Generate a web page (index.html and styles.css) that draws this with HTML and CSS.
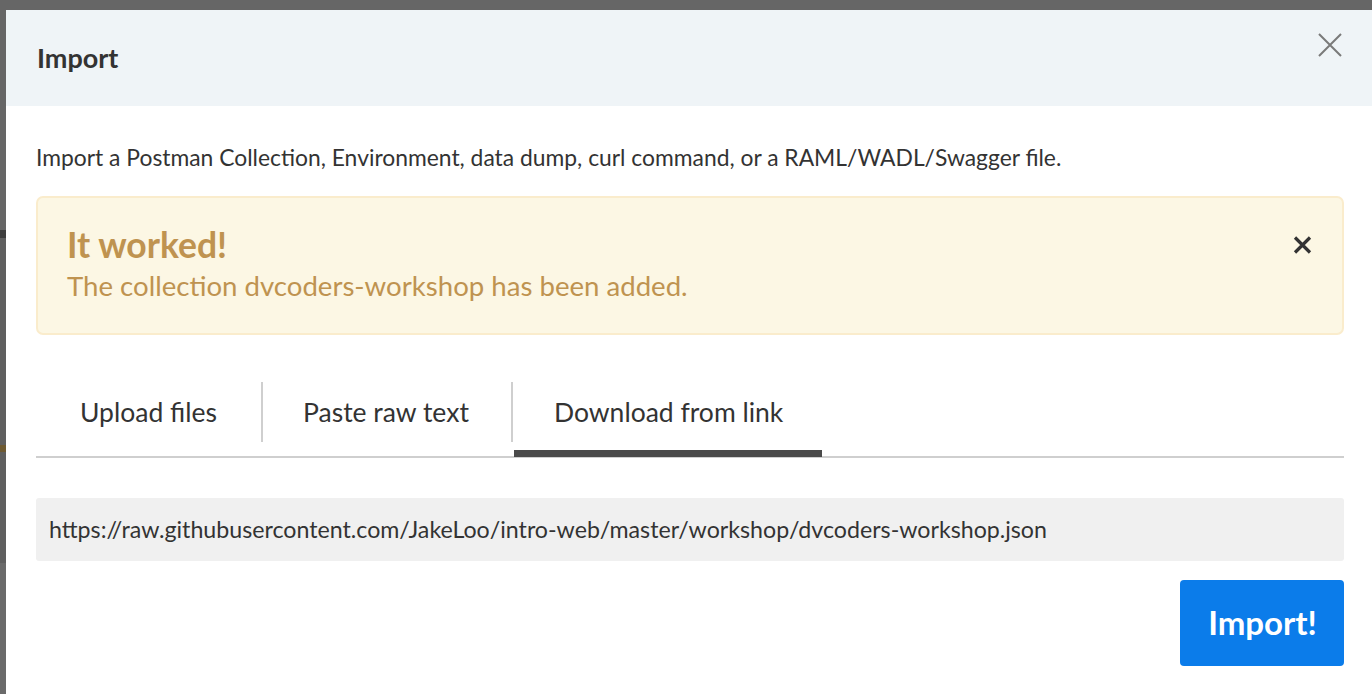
FILE: index.html
```html
<!DOCTYPE html>
<html>
<head>
<meta charset="utf-8">
<link rel="stylesheet" href="styles.css">
</head>
<body>
<div class="backdrop">
  <div class="modal">
    <div class="modal-header">
      <h1 class="modal-title">Import</h1>
      <button class="modal-close" aria-label="Close">
        <svg width="24" height="24" viewBox="0 0 24 24"><path d="M1 1L23 23M23 1L1 23" stroke="#7a7a7a" stroke-width="2" fill="none"/></svg>
      </button>
    </div>
    <div class="modal-body">
      <p class="intro">Import a Postman Collection, Environment, data dump, curl command, or a RAML/WADL/Swagger file.</p>
      <div class="alert">
        <div class="alert-text">
          <div class="alert-title">It worked!</div>
          <div class="alert-msg">The collection dvcoders-workshop has been added.</div>
        </div>
        <button class="alert-close" aria-label="Dismiss">
          <svg width="19" height="18" viewBox="0 0 19 18"><path d="M2 1.5L17 16.5M17 1.5L2 16.5" stroke="#333" stroke-width="3.2" fill="none"/></svg>
        </button>
      </div>
      <div class="tabs">
        <div class="tab first">Upload files</div>
        <div class="tab second">Paste raw text</div>
        <div class="tab third active">Download from link</div>
      </div>
      <div class="url-field">https://raw.githubusercontent.com/JakeLoo/intro-web/master/workshop/dvcoders-workshop.json</div>
      <div class="actions">
        <button class="btn-import">Import!</button>
      </div>
    </div>
  </div>
</div>
</body>
</html>
```

FILE: styles.css
```css
* { box-sizing: border-box; }
html, body {
  margin: 0;
  height: 100%;
  overflow: hidden;
}
body {
  background: #6b6b6b;
  font-family: Lato, "Noto Sans", sans-serif;
  color: #333;
}
.backdrop {
  padding: 10px 0 0 6px;
  height: 100%;
  background:
    linear-gradient(to bottom,
      #666 0, #666 230px, #3e3e3e 230px, #3e3e3e 238px,
      #5f5f5f 238px, #5f5f5f 445px, #6e5a32 445px, #6e5a32 452px,
      #5f5f5f 452px, #5f5f5f 563px, #6a6a6a 563px);
}
.modal {
  width: 1368px;
  background: #fff;
  height: 700px;
}
.modal-header {
  height: 96px;
  background: #eff4f7;
  display: flex;
  align-items: center;
  justify-content: space-between;
  padding: 0 32px 0 31px;
}
.modal-title {
  margin: 0 0 2px;
  font-size: 27px;
  font-weight: 700;
  color: #333;
}
.modal-close {
  border: 0;
  background: none;
  padding: 0;
  margin-top: -26px;
  display: flex;
}
.modal-body {
  padding: 0 30px;
}
.intro {
  margin: 0;
  padding-top: 37px;
  font-size: 22.85px;
  line-height: 28px;
  color: #333;
}
.alert {
  margin-top: 25px;
  height: 139px;
  background: #fcf7e4;
  border: 2px solid #faeccc;
  border-radius: 7px;
  display: flex;
  justify-content: space-between;
  padding: 25px 30px 0 29px;
}
.alert-title {
  font-size: 35.5px;
  font-weight: 700;
  color: #bf9350;
  line-height: 43px;
}
.alert-msg {
  margin-top: 3px;
  font-size: 27.6px;
  color: #bf9350;
  line-height: 34px;
}
.alert-close {
  border: 0;
  background: none;
  padding: 0;
  margin-top: 13px;
  align-self: flex-start;
  display: flex;
}
.tabs {
  margin-top: 47px;
  display: flex;
  border-bottom: 2px solid #cfcfcf;
  padding-bottom: 14px;
}
.tab {
  font-size: 26.5px;
  line-height: 60px;
  height: 60px;
  color: #333;
  position: relative;
  white-space: nowrap;
}
.tab.first {
  width: 225px;
  padding-left: 44px;
}
.tab.second {
  width: 250px;
  border-left: 2px solid #cfcfcf;
  padding-left: 40px;
}
.tab.third {
  width: 311px;
  border-left: 2px solid #cfcfcf;
  padding-left: 41px;
}
.tab.active::after {
  content: "";
  position: absolute;
  left: 1px;
  right: 0;
  top: 68px;
  height: 7px;
  background: #4a4a4a;
}
.url-field {
  margin-top: 40px;
  height: 63px;
  background: #f0f0f0;
  border-radius: 3px;
  font-size: 23.2px;
  line-height: 63px;
  padding-left: 13px;
  color: #333;
  white-space: nowrap;
}
.actions {
  display: flex;
  justify-content: flex-end;
  margin-top: 19px;
}
.btn-import {
  width: 164px;
  height: 86px;
  border: 0;
  border-radius: 4px;
  background: #0b7cea;
  color: #fff;
  font-family: Lato, sans-serif;
  font-size: 33px;
  font-weight: 700;
  padding: 0 0 2px 1px;
}
```
